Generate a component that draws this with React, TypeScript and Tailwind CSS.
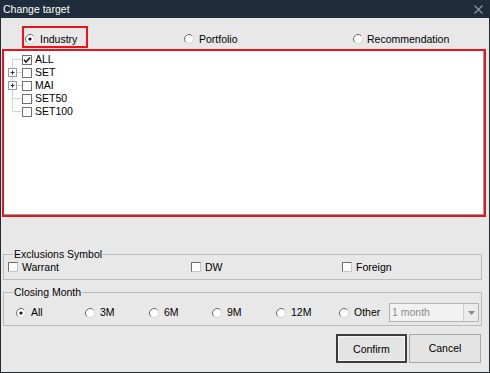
import React from 'react';

function Radio({ checked = false }: { checked?: boolean }) {
  return (
    <svg width="12" height="12" viewBox="0 0 12 12" className="shrink-0">
      <circle cx="6" cy="6" r="4.5" fill="#ffffff" stroke="#d6d6d6" />
      <path d="M2.82 9.18 A4.5 4.5 0 0 1 9.18 2.82" fill="none" stroke="#707070" />
      {checked && <circle cx="6" cy="6" r="1.6" fill="#111111" />}
    </svg>
  );
}

function Check({ checked = false, flat = false }: { checked?: boolean; flat?: boolean }) {
  return (
    <svg width="10" height="10" viewBox="0 0 10 10" className="shrink-0">
      <rect x="0.5" y="0.5" width="9" height="9" fill="#ffffff" stroke={flat ? '#707070' : '#c4c4c4'} />
      {!flat && <path d="M0.5 9.5 V0.5 H9.5" fill="none" stroke="#6a6a6a" />}
      {checked && <path d="M2 4.8 L4 7 L8 2.4" fill="none" stroke="#1a1a1a" strokeWidth="1.5" />}
    </svg>
  );
}

function TreeLines() {
  const rows = [6.5, 19.5, 32.5, 45.5, 58.5];
  return (
    <svg width="18" height="65" viewBox="0 0 18 65" className="shrink-0">
      <path d="M8.5 6.5 V58.5" stroke="#a8a8a8" strokeDasharray="1 1" />
      {rows.map((y) => (
        <path key={y} d={`M8.5 ${y} H18`} stroke="#a8a8a8" strokeDasharray="1 1" />
      ))}
      {[19.5, 32.5].map((y) => (
        <g key={y}>
          <rect x="4.5" y={y - 4} width="8" height="8" fill="#ffffff" stroke="#9a9a9a" />
          <path d={`M6.5 ${y} H10.5 M8.5 ${y - 2} V${y + 2}`} stroke="#333333" />
        </g>
      ))}
    </svg>
  );
}

const tree = [
  { label: 'ALL', checked: true },
  { label: 'SET' },
  { label: 'MAI' },
  { label: 'SET50' },
  { label: 'SET100' },
];

const months = [
  { label: 'All', w: 'w-[69px]', checked: true },
  { label: '3M', w: 'w-[64px]' },
  { label: '6M', w: 'w-[63px]' },
  { label: '9M', w: 'w-[64px]' },
  { label: '12M', w: 'w-[63px]' },
  { label: 'Other', w: 'w-[51px]' },
];

export default function App() {
  return (
    <div className="w-[490px] h-[373px] flex flex-col bg-[#1e2c3c] font-['Liberation_Sans',Arial,sans-serif] text-[10.5px] text-black leading-[13px]">
      {/* title bar */}
      <div className="h-[18px] flex items-center justify-between pl-[3px] pr-[7px] text-white">
        <span>Change target</span>
        <svg width="9" height="9" viewBox="0 0 9 9">
          <path d="M0.5 0.5 L8.5 8.5 M8.5 0.5 L0.5 8.5" stroke="#8a95a2" strokeWidth="1.2" />
        </svg>
      </div>

      <div className="flex-1 mx-[1px] mb-[1px] bg-[#e8e8e8] flex flex-col">
        {/* target type */}
        <div className="mt-[8px] h-[22px] flex items-center">
          <div className="ml-[21px] w-[66px] h-[22px] border-2 border-[#e8141c] pt-[4px] flex items-center gap-[4px]">
            <Radio checked />
            <span>Industry</span>
          </div>
          <div className="ml-[95px] w-[169px] pt-[4px] flex items-center gap-[4px]">
            <Radio />
            <span>Portfolio</span>
          </div>
          <div className="pt-[4px] flex items-center gap-[3px]">
            <Radio />
            <span>Recommendation</span>
          </div>
        </div>

        {/* tree */}
        <div className="mt-[1px] ml-[1px] w-[484px] h-[168px] border-2 border-[#e8141c]">
          <div className="h-full bg-white border-r border-b border-[#8fa6a6] pt-[2px] flex">
            <TreeLines />
            <div className="flex flex-col">
              {tree.map((t) => (
                <div key={t.label} className="h-[13px] flex items-center gap-[3px]">
                  <Check checked={t.checked} flat />
                  <span>{t.label}</span>
                </div>
              ))}
            </div>
          </div>
        </div>

        {/* exclusions */}
        <fieldset className="mt-[31px] ml-[2px] w-[479px] border border-[#bcbcbc] pl-[4px] pb-[6px]">
          <legend className="ml-[5px] px-[1px]">Exclusions Symbol</legend>
          <div className="h-[12px] flex items-center">
            <div className="w-[183px] flex items-center gap-[4px]">
              <Check />
              <span>Warrant</span>
            </div>
            <div className="w-[151px] flex items-center gap-[4px]">
              <Check />
              <span>DW</span>
            </div>
            <div className="flex items-center gap-[4px]">
              <Check />
              <span>Foreign</span>
            </div>
          </div>
        </fieldset>

        {/* closing month */}
        <fieldset className="mt-[6px] ml-[2px] w-[479px] border border-[#bcbcbc] pl-[11px] pt-[4px] pb-[3px]">
          <legend className="ml-[-2px] px-[1px]">Closing Month</legend>
          <div className="h-[19px] flex items-center">
            {months.map((m) => (
              <div key={m.label} className={`${m.w} flex items-center gap-[4px]`}>
                <Radio checked={m.checked} />
                <span>{m.label}</span>
              </div>
            ))}
            <div className="w-[90px] h-[19px] border border-[#b4b4b4] bg-[#f2f2f2] flex items-center">
              <span className="flex-1 pl-[2px] text-[#8c8c8c]">1 month</span>
              <div className="w-[15px] h-full border-l border-[#d0d0d0] bg-[#ececec] flex items-center justify-center">
                <svg width="7" height="4" viewBox="0 0 7 4">
                  <path d="M0 0 H7 L3.5 4 Z" fill="#8a8a8a" />
                </svg>
              </div>
            </div>
          </div>
        </fieldset>

        {/* buttons */}
        <div className="mt-[8px] pr-[8px] flex justify-end gap-[2px]">
          <button className="w-[71px] h-[29px] border-2 border-[#3c3c3c] bg-[#e4e4e4]">
            <span className="block h-full border border-[#f4f4f4] leading-[25px]">Confirm</span>
          </button>
          <button className="w-[72px] h-[29px] border border-[#a8a8a8] bg-[#e4e4e4]">Cancel</button>
        </div>
      </div>
    </div>
  );
}
